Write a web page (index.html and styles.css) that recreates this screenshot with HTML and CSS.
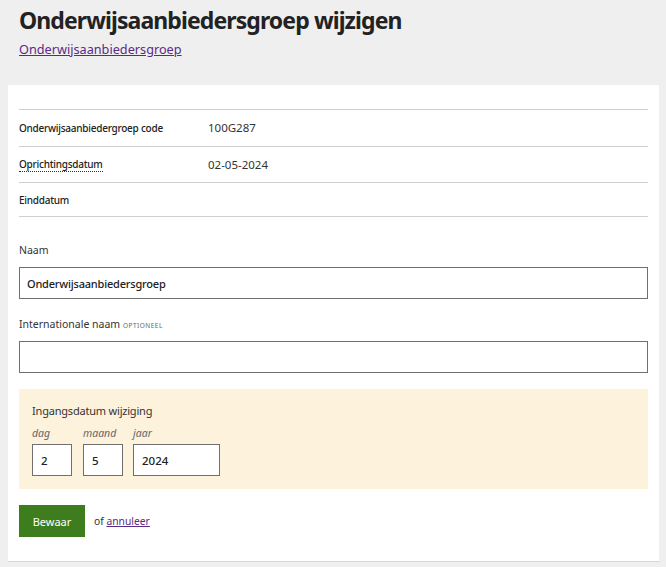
FILE: index.html
```html
<!DOCTYPE html>
<html lang="nl">
<head>
<meta charset="utf-8">
<title>Onderwijsaanbiedersgroep wijzigen</title>
<link rel="stylesheet" href="styles.css">
</head>
<body>
<div class="page">
  <header class="head">
    <h1 class="title">Onderwijsaanbiedersgroep wijzigen</h1>
    <a class="crumb" href="#">Onderwijsaanbiedersgroep</a>
  </header>
  <main class="card">
    <dl class="facts">
      <div class="fact"><dt>Onderwijsaanbiedergroep code</dt><dd>100G287</dd></div>
      <div class="fact"><dt><abbr class="dotted">Oprichtingsdatum</abbr></dt><dd>02-05-2024</dd></div>
      <div class="fact fact-empty"><dt>Einddatum</dt><dd></dd></div>
    </dl>
    <form class="form">
      <div class="field">
        <label class="label">Naam</label>
        <div class="input input-bold">Onderwijsaanbiedersgroep</div>
      </div>
      <div class="field">
        <label class="label">Internationale naam <span class="opt">OPTIONEEL</span></label>
        <div class="input"></div>
      </div>
      <fieldset class="datebox">
        <div class="legend">Ingangsdatum wijziging</div>
        <div class="dates">
          <div class="dpart"><span class="dlabel">dag</span><div class="dinput small">2</div></div>
          <div class="dpart"><span class="dlabel">maand</span><div class="dinput small">5</div></div>
          <div class="dpart"><span class="dlabel">jaar</span><div class="dinput large">2024</div></div>
        </div>
      </fieldset>
      <div class="actions">
        <button type="button" class="btn">Bewaar</button>
        <span class="or">of <a href="#" class="cancel">annuleer</a></span>
      </div>
    </form>
  </main>
</div>
</body>
</html>
```

FILE: styles.css
```css
* { box-sizing: border-box; }
html, body { margin: 0; padding: 0; }
body {
  background: #efefef;
  font-family: "Noto Sans", "Open Sans", sans-serif;
  color: #222;
}
.page { padding: 0 7px 0 8px; }
.head { padding: 4px 11px 0; height: 85px; }
.title {
  margin: 0;
  font-size: 23px;
  line-height: 32px;
  font-weight: 700;
  color: #222;
  letter-spacing: -0.9px;
}
.crumb {
  display: inline-block;
  margin-top: 4px;
  font-size: 12.7px;
  line-height: 18px;
  color: #5b2a86;
}
.card {
  background: #fff;
  padding: 24px 11px 24px;
  border-bottom: 1px solid #d6d6d6;
}
.facts { margin: 0; border-top: 1px solid #cfcfcf; }
.fact {
  display: flex;
  align-items: center;
  height: 36.5px;
  border-bottom: 1px solid #cfcfcf;
  font-size: 10px;
}
.fact-empty { height: 34px; }
.fact dt { width: 189px; font-weight: 500; color: #222; letter-spacing: -0.25px; }
.fact dd { margin: 0; font-size: 11.5px; color: #333; }
.dotted { text-decoration: none; border-bottom: 1px dotted #333; }
.form { padding-top: 25px; }
.field { margin-bottom: 17px; }
.field + .datebox { margin-top: -1px; }
.label { display: block; font-size: 10.5px; line-height: 16px; height: 16px; color: #333; margin-bottom: 9px; }
.opt { font-size: 6.5px; line-height: 0; letter-spacing: 0.5px; color: #666; }
.input {
  height: 32px;
  border: 1px solid #6f6f6f;
  background: #fff;
  padding: 0 7px;
  display: flex;
  align-items: center;
  font-size: 11px;
  letter-spacing: -0.2px;
}
.input-bold { font-weight: 500; }
.datebox {
  margin: 0;
  border: 0;
  background: #fdf2dc;
  padding: 14px 13px 13px;
}
.legend { font-size: 11px; line-height: 16px; color: #333; letter-spacing: -0.2px; }
.dates { display: flex; gap: 11px; margin-top: 6px; }
.dpart { display: flex; flex-direction: column; }
.dpart + .dpart + .dpart { margin-left: -1px; }
.dlabel { font-size: 10.5px; font-style: italic; color: #666; line-height: 16px; margin-bottom: 3px; }
.dinput {
  height: 32px;
  border: 1px solid #6f6f6f;
  background: #fff;
  display: flex;
  align-items: center;
  padding: 0 8px;
  font-size: 11.5px;
  font-weight: 500;
}
.small { width: 40px; }
.large { width: 87px; }
.actions { display: flex; align-items: center; gap: 9px; margin-top: 16px; }
.btn {
  width: 66px;
  height: 32px;
  border: 0;
  background: #3d7d1e;
  color: #fff;
  font-family: inherit;
  font-size: 11px;
  padding: 0;
}
.or { font-size: 10.3px; color: #333; }
.cancel { color: #5b2a86; }
```
